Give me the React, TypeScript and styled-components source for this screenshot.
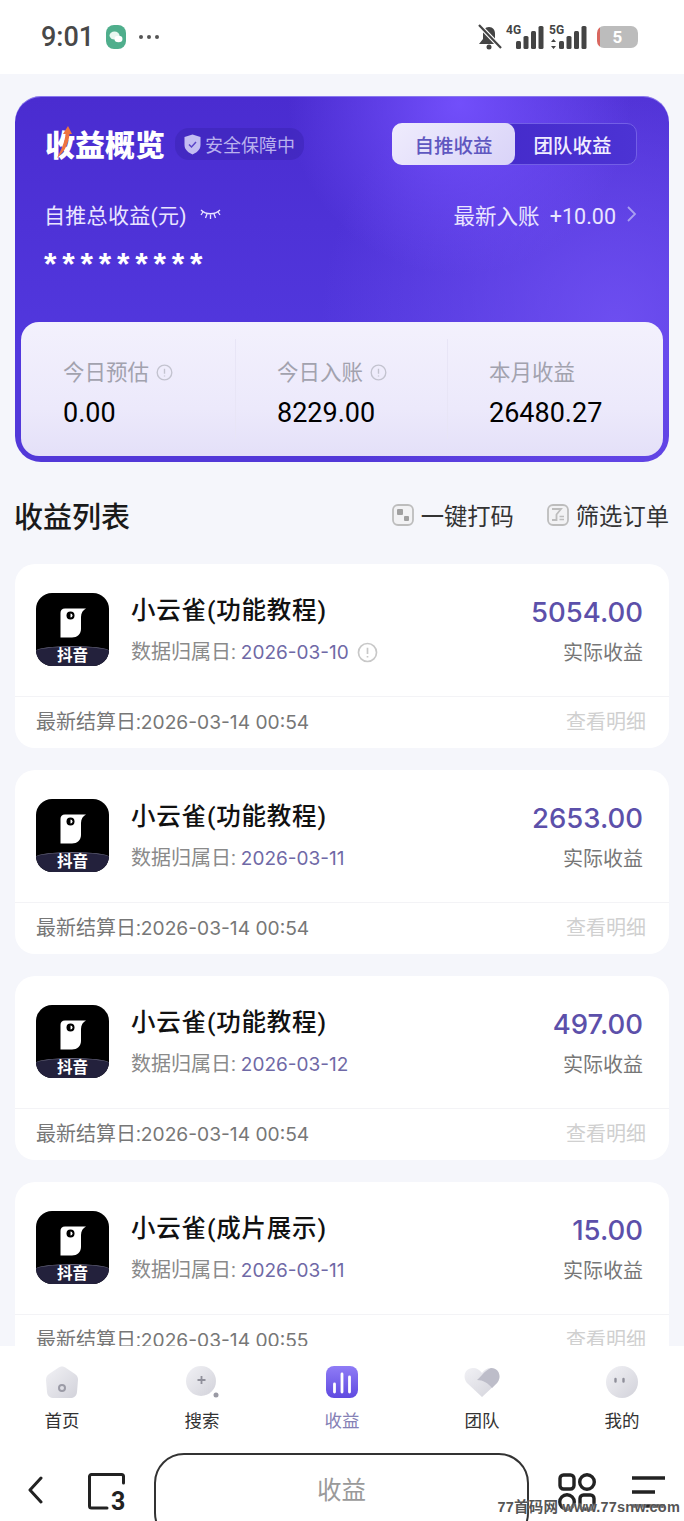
import React from "react";
import styled, { createGlobalStyle } from "styled-components";

const GlobalStyle = createGlobalStyle`
  html, body {
    margin: 0;
    padding: 0;
    background: #f5f6fb;
  }
  * { box-sizing: border-box; }
`;

const Screen = styled.div`
  position: relative;
  width: 684px;
  height: 1521px;
  overflow: hidden;
  display: flex;
  flex-direction: column;
  font-family: Roboto, "Noto Sans CJK SC", sans-serif;
  color: #111;
`;

const StatusBar = styled.div`
  height: 74px;
  flex: none;
  background: #fff;
  display: flex;
  align-items: center;
  justify-content: space-between;
  padding: 0 46px 0 41px;
`;

const StatusLeft = styled.div`
  display: flex;
  align-items: center;
  gap: 12px;
`;

const Clock = styled.span`
  font-size: 27px;
  line-height: 30px;
  font-weight: 500;
  color: #484848;
`;

const StatusRight = styled.div`
  display: flex;
  align-items: center;
  gap: 4px;
`;

const Signal = styled.div`
  position: relative;
  width: 39px;
  height: 26px;
`;

const SignalLabel = styled.span`
  position: absolute;
  left: 0;
  top: 0;
  font-size: 12px;
  line-height: 12px;
  font-weight: 700;
  color: #444;
`;

const Battery = styled.div`
  width: 41px;
  height: 22px;
  margin-left: 5px;
  border-radius: 7px;
  background: linear-gradient(90deg, #d9675f 0 3px, #bcbcbc 3px);
  color: #fff;
  font-size: 17px;
  font-weight: 700;
  line-height: 22px;
  text-align: center;
`;

const Main = styled.main`
  flex: 1;
  min-height: 0;
  overflow: hidden;
  padding: 22px 15px 0;
  display: flex;
  flex-direction: column;
`;

const Hero = styled.section`
  flex: none;
  height: 366px;
  padding: 27px 6px 6px;
  border-radius: 26px;
  box-shadow: inset 0 1px 0 #8a78ee;
  background:
    radial-gradient(circle at 68% 2%, rgba(118, 82, 255, 0.9), rgba(118, 82, 255, 0) 30%),
    radial-gradient(circle at 92% 62%, rgba(116, 84, 245, 0.8), rgba(116, 84, 245, 0) 46%),
    linear-gradient(180deg, #4a2cd0 0%, #5238de 70%, #5238d8 100%);
`;

const HeroHead = styled.div`
  height: 42px;
  padding: 0 26px 0 24px;
  display: flex;
  align-items: center;
  justify-content: space-between;
`;

const TitleGroup = styled.div`
  display: flex;
  align-items: center;
  gap: 10px;
`;

const HeroTitle = styled.h1`
  position: relative;
  margin: 0;
  padding-top: 4px;
  font-size: 30px;
  line-height: 36px;
  font-weight: 900;
  color: #fff;
`;

const TitleArrow = styled.svg`
  position: absolute;
  left: 11px;
  top: 2px;
`;

const SafeBadge = styled.div`
  height: 32px;
  padding: 0 9px;
  border-radius: 14px;
  background: rgba(60, 36, 180, 0.55);
  display: flex;
  align-items: center;
  gap: 4px;
  font-size: 18px;
  color: #b9b1ee;
`;

const Tabs = styled.div`
  width: 245px;
  height: 42px;
  display: flex;
  border: 1px solid #735fe6;
  border-radius: 10px;
  background: linear-gradient(90deg, #3f25c4, #4c33d4);
`;

const Tab = styled.div<{ $active?: boolean }>`
  flex: ${(p) => (p.$active ? "0 0 123px" : "1")};
  margin: ${(p) => (p.$active ? "-1px 0 -1px -1px" : "0")};
  padding-right: ${(p) => (p.$active ? "0" : "6px")};
  display: flex;
  align-items: center;
  justify-content: center;
  border-radius: 10px;
  font-size: 19.5px;
  font-weight: 500;
  color: ${(p) => (p.$active ? "#5f57c0" : "#f0edff")};
  background: ${(p) => (p.$active ? "linear-gradient(135deg, #efecfd, #d9d3f8)" : "transparent")};
`;

const TotalRow = styled.div`
  height: 28px;
  margin-top: 35px;
  padding: 0 26px 0 23px;
  display: flex;
  align-items: center;
  justify-content: space-between;
  font-size: 21px;
  color: #e9e5ff;
`;

const TotalLabel = styled.div`
  display: flex;
  align-items: center;
  gap: 13px;
  letter-spacing: 0.3px;
`;

const LatestLink = styled.div`
  display: flex;
  align-items: center;
  gap: 10px;
  font-size: 21.5px;
  word-spacing: 5px;
`;

const Stars = styled.div`
  height: 30px;
  margin-top: 16px;
  padding-left: 23px;
  font-family: "Liberation Sans", sans-serif;
  font-size: 32px;
  line-height: 40px;
  font-weight: 700;
  letter-spacing: 5.8px;
  color: #fff;
`;

const SummaryPanel = styled.div`
  height: 134px;
  margin-top: 48px;
  border-radius: 18px;
  background: linear-gradient(180deg, #f3f1fd 0%, #ece9fb 65%, #e4e0f8 100%);
  display: grid;
  grid-template-columns: 214px 212px 1fr;
  align-items: center;
`;

const SummaryCell = styled.div<{ $divided?: boolean }>`
  height: 100px;
  padding: 8px 0 0 ${(p) => (p.$divided ? "41px" : "42px")};
  border-left: ${(p) => (p.$divided ? "1px solid #e8e5f6" : "none")};
  display: flex;
  flex-direction: column;
  gap: 9px;
  justify-content: center;
`;

const SummaryLabel = styled.div`
  display: flex;
  align-items: center;
  gap: 7px;
  font-size: 21.5px;
  line-height: 30px;
  color: #a2a2ae;
`;

const SummaryValue = styled.div`
  font-size: 27px;
  line-height: 32px;
  color: #000;
`;

const ListHead = styled.div`
  flex: none;
  height: 102px;
  padding-top: 4px;
  display: flex;
  align-items: center;
  justify-content: space-between;
`;

const ListTitle = styled.h2`
  margin: 0 0 0 -1px;
  font-size: 29px;
  font-weight: 500;
  color: #1a1a1a;
`;

const ListActions = styled.div`
  display: flex;
  gap: 33px;
`;

const ListAction = styled.div`
  display: flex;
  align-items: center;
  gap: 7px;
  font-size: 23.3px;
  color: #333;
`;

const Cards = styled.div`
  display: flex;
  flex-direction: column;
  gap: 22px;
`;

const Card = styled.article`
  flex: none;
  height: 184px;
  border-radius: 20px;
  background: #fff;
  display: flex;
  flex-direction: column;
`;

const CardBody = styled.div`
  height: 133px;
  padding: 3px 26px 0 21px;
  border-bottom: 1px solid #f3f3f6;
  display: flex;
  align-items: center;
  gap: 22px;
`;

const AppIcon = styled.div`
  width: 73px;
  height: 73px;
  margin-top: -5px;
  flex: none;
  overflow: hidden;
  border-radius: 16px;
  background: #000;
  display: flex;
  flex-direction: column;
  align-items: center;
  justify-content: flex-end;
`;

const AppBird = styled.svg`
  flex: none;
  margin: 0 0 8px 1px;
`;

const AppBadge = styled.div`
  width: 100%;
  height: 20px;
  border-top: 1px solid #6b6a80;
  border-radius: 50% 50% 0 0 / 5px 5px 0 0;
  background: #23213c;
  color: #fff;
  font-size: 15.5px;
  line-height: 19px;
  font-weight: 700;
  text-align: center;
`;

const CardInfo = styled.div`
  flex: 1;
  display: flex;
  flex-direction: column;
  gap: 10px;
`;

const CardTitle = styled.div`
  font-size: 24.5px;
  line-height: 32px;
  font-weight: 500;
  letter-spacing: 0.8px;
  color: #111;
`;

const CardSub = styled.div`
  display: flex;
  align-items: center;
  gap: 8px;
  font-size: 20px;
  line-height: 30px;
  color: #8a8a8a;
`;

const DateValue = styled.span`
  font-family: Inter, sans-serif;
  font-size: 19px;
  color: #6f69a6;
`;

const CardRight = styled.div`
  display: flex;
  flex-direction: column;
  align-items: flex-end;
  gap: 10px;
`;

const Amount = styled.div`
  font-family: Inter, sans-serif;
  font-size: 27.5px;
  line-height: 32px;
  font-weight: 500;
  color: #5c50aa;
`;

const AmountLabel = styled.div`
  font-size: 20px;
  line-height: 30px;
  color: #777;
`;

const CardFoot = styled.div`
  flex: 1;
  padding: 0 23px 4px 21px;
  display: flex;
  align-items: center;
  justify-content: space-between;
  font-size: 20px;
  color: #777;
`;

const SettledValue = styled.span`
  font-family: Inter, sans-serif;
  font-size: 19.2px;
`;

const DetailLink = styled.span`
  color: #d0d0d0;
`;

const Bottom = styled.div`
  flex: none;
  height: 175px;
  overflow: hidden;
  background: #fff;
  display: flex;
  flex-direction: column;
`;

const TabBar = styled.nav`
  flex: none;
  height: 107px;
  padding: 20px 22px 0;
  display: flex;
  justify-content: space-between;
`;

const NavItem = styled.div<{ $active?: boolean }>`
  width: 80px;
  display: flex;
  flex-direction: column;
  align-items: center;
  font-size: 17.5px;
  line-height: 26px;
  color: ${(p) => (p.$active ? "#8580b5" : "#333")};
`;

const NavGlyph = styled.div`
  height: 34px;
  margin-bottom: 8px;
  display: flex;
  align-items: flex-start;
  justify-content: center;
`;

const BrowserBar = styled.div`
  flex: none;
  height: 68px;
  padding: 0 19px 0 28px;
  display: flex;
  align-items: flex-start;
`;

const BrowserIcon = styled.svg<{ $left: number; $top: number }>`
  flex: none;
  margin-left: ${(p) => p.$left}px;
  margin-top: ${(p) => p.$top}px;
`;

const AddressPill = styled.div`
  flex: none;
  width: 375px;
  height: 90px;
  margin-left: 29px;
  border: 2px solid #333;
  border-radius: 30px;
  padding-top: 19px;
  text-align: center;
  font-size: 24.5px;
  line-height: 34px;
  color: #9a9a9a;
`;

const Watermark = styled.div`
  position: absolute;
  right: 4px;
  bottom: 6px;
  font-family: "Liberation Sans", "Noto Sans CJK SC", sans-serif;
  font-size: 14.5px;
  line-height: 16px;
  font-weight: 700;
  letter-spacing: 0.2px;
  color: #555;
  text-shadow: 0 0 2px #fff;
`;

const InfoIcon = ({ size, color }: { size: number; color: string }) => (
  <svg width={size} height={size} viewBox="0 0 20 20" fill="none" stroke={color} strokeWidth="1.6">
    <circle cx="10" cy="10" r="8.6" />
    <path d="M10 5.5v6M10 13.4v1.4" />
  </svg>
);

const Bird = () => (
  <AppBird width="26" height="30" viewBox="0 0 26 30">
    <path d="M5 0.500H26C23 2 21 5 21 9V21C21 26 17 29.500 12 29.500H0.500V5C0.500 2 2 0.500 5 0.500Z" fill="#fff" />
    <circle cx="10.500" cy="7.500" r="4" fill="#000" />
    <path d="M10.500 5.500a2 2 0 0 1 0 4Z" fill="#fff" />
  </AppBird>
);

const IncomeCard = ({
  name,
  date,
  amount,
  settled,
  hasInfo,
}: {
  name: string;
  date: string;
  amount: string;
  settled: string;
  hasInfo?: boolean;
}) => (
  <Card>
    <CardBody>
      <AppIcon>
        <Bird />
        <AppBadge>抖音</AppBadge>
      </AppIcon>
      <CardInfo>
        <CardTitle>{name}</CardTitle>
        <CardSub>
          <span>
            数据归属日: <DateValue>{date}</DateValue>
          </span>
          {hasInfo && <InfoIcon size={21} color="#c8c8c8" />}
        </CardSub>
      </CardInfo>
      <CardRight>
        <Amount>{amount}</Amount>
        <AmountLabel>实际收益</AmountLabel>
      </CardRight>
    </CardBody>
    <CardFoot>
      <span>
        最新结算日:<SettledValue>{settled}</SettledValue>
      </span>
      <DetailLink>查看明细</DetailLink>
    </CardFoot>
  </Card>
);

const navIcons: Record<string, React.ReactNode> = {
  home: (
    <svg width="32" height="32" viewBox="0 0 32 32">
      <path d="M16 0.500C17.500 0.500 18.500 1 20 2L29 8C31 9.500 32 11 32 14L31 26C30.500 30 28 32 24 32H8C4 32 1.500 30 1 26L0 14C0 11 1 9.500 3 8L12 2C13.500 1 14.500 0.500 16 0.500Z" fill="url(#navGrey)" />
      <circle cx="16" cy="22" r="3" fill="none" stroke="#9b9ba6" strokeWidth="2" />
    </svg>
  ),
  search: (
    <svg width="33" height="32" viewBox="0 0 33 32">
      <circle cx="15" cy="15" r="15" fill="url(#navGrey)" />
      <path d="M15.500 10v8M11.500 14h8" stroke="#8f8f9a" strokeWidth="1.800" />
      <circle cx="30" cy="29" r="2.500" fill="#9a9aa4" />
    </svg>
  ),
  income: (
    <svg width="32" height="32" viewBox="0 0 32 32">
      <rect width="32" height="32" rx="8" fill="url(#navPurple)" />
      <path d="M8.500 18v8M16 8v18M23.500 11v15" stroke="#fff" strokeWidth="2.800" strokeLinecap="round" />
    </svg>
  ),
  team: (
    <svg width="36" height="32" viewBox="0 0 36 32">
      <path d="M18 31L3 17C-2 11 1 2 9 2C13 2 16 4 18 7C20 4 23 2 27 2C35 2 38 11 33 17Z" fill="url(#navGrey)" />
      <path d="M13 14C17 11 20 5 27 2C35 2 38 11 33 17L28 22C24 17 19 14 13 14Z" fill="#bdbdc9" />
    </svg>
  ),
  mine: (
    <svg width="32" height="32" viewBox="0 0 32 32">
      <circle cx="16" cy="16" r="16" fill="url(#navGrey)" />
      <path d="M9.500 13v2.500M17.500 13v2.500" stroke="#8f8f9a" strokeWidth="2.400" strokeLinecap="round" />
    </svg>
  ),
};

const navItems = [
  { key: "home", label: "首页" },
  { key: "search", label: "搜索" },
  { key: "income", label: "收益", active: true },
  { key: "team", label: "团队" },
  { key: "mine", label: "我的" },
];

const cards = [
  { name: "小云雀(功能教程)", date: "2026-03-10", amount: "5054.00", settled: "2026-03-14 00:54", hasInfo: true },
  { name: "小云雀(功能教程)", date: "2026-03-11", amount: "2653.00", settled: "2026-03-14 00:54" },
  { name: "小云雀(功能教程)", date: "2026-03-12", amount: "497.00", settled: "2026-03-14 00:54" },
  { name: "小云雀(成片展示)", date: "2026-03-11", amount: "15.00", settled: "2026-03-14 00:55" },
];

const SignalBars = ({ fiveG }: { fiveG?: boolean }) => (
  <svg width="39" height="26" viewBox="0 0 39 26" style={{ position: "absolute", left: 0, top: 0 }}>
    <g fill="#444">
      {fiveG && <path d="M4.500 15l2.500 3H2ZM4.500 25l2.500-3H2Z" />}
      <rect x="10" y="17" width="5" height="8" rx="1.500" />
      <rect x="17.500" y="12" width="5" height="13" rx="1.500" />
      <rect x="25" y="7" width="5" height="18" rx="1.500" />
      <rect x="32.500" y="2" width="5" height="23" rx="1.500" />
    </g>
  </svg>
);

export default function App() {
  return (
    <Screen>
      <GlobalStyle />
      <svg width="0" height="0" style={{ position: "absolute" }}>
        <defs>
          <linearGradient id="navGrey" x1="0" y1="0" x2="1" y2="1">
            <stop offset="0" stopColor="#f1f1f5" />
            <stop offset="1" stopColor="#d2d2da" />
          </linearGradient>
          <linearGradient id="navPurple" x1="0" y1="0" x2="0" y2="1">
            <stop offset="0" stopColor="#8f7cf6" />
            <stop offset="1" stopColor="#5f4ae0" />
          </linearGradient>
        </defs>
      </svg>

      <StatusBar>
        <StatusLeft>
          <Clock>9:01</Clock>
          <svg width="20" height="24" viewBox="0 0 20 24">
            <rect width="20" height="24" rx="8" fill="#4fae8c" />
            <ellipse cx="8.500" cy="10.500" rx="5" ry="4" fill="#e8f7f0" />
            <ellipse cx="12.500" cy="14" rx="4" ry="3.200" fill="#fff" />
          </svg>
          <svg width="22" height="6" viewBox="0 0 22 6" fill="#555">
            <circle cx="3" cy="3" r="2" />
            <circle cx="11" cy="3" r="2" />
            <circle cx="19" cy="3" r="2" />
          </svg>
        </StatusLeft>
        <StatusRight>
          <svg width="25" height="26" viewBox="0 0 25 26">
            <path d="M12 3C8 3 6 6 6 10V15L2 20H22L18 15V10C18 6 16 3 12 3Z" fill="#444" />
            <circle cx="12" cy="23" r="2.500" fill="#444" />
            <path d="M2 1L24 24" stroke="#fff" strokeWidth="4.500" />
            <path d="M2 1L24 24" stroke="#444" strokeWidth="2.200" />
          </svg>
          <Signal>
            <SignalLabel>4G</SignalLabel>
            <SignalBars />
          </Signal>
          <Signal>
            <SignalLabel>5G</SignalLabel>
            <SignalBars fiveG />
          </Signal>
          <Battery>5</Battery>
        </StatusRight>
      </StatusBar>

      <Main>
        <Hero>
          <HeroHead>
            <TitleGroup>
              <HeroTitle>
                收益概览
                <TitleArrow width="16" height="32" viewBox="0 0 16 32">
                  <path d="M12 0L16 8H13.500C13 16 9 26 1 32C5 24 9 16 9.500 8H7Z" fill="#ee7440" />
                </TitleArrow>
              </HeroTitle>
              <SafeBadge>
                <svg width="17" height="21" viewBox="0 0 17 21">
                  <path d="M8.500 0.500L16.500 3V11C16.500 16 12 19 8.500 20.500C5 19 0.500 16 0.500 11V3Z" fill="#c3bdf2" />
                  <path d="M5 10.500l2.500 2.500 4.500-5" fill="none" stroke="#5a44c8" strokeWidth="1.500" />
                </svg>
                安全保障中
              </SafeBadge>
            </TitleGroup>
            <Tabs>
              <Tab $active>自推收益</Tab>
              <Tab>团队收益</Tab>
            </Tabs>
          </HeroHead>

          <TotalRow>
            <TotalLabel>
              自推总收益(元)
              <svg width="21" height="12" viewBox="0 0 21 12" fill="none" stroke="#e9e5ff" strokeWidth="1.300">
                <path d="M1 2C6 7 15 7 20 2" />
                <path d="M3 4L1 7M7 6L5.500 10M10.500 6.500V11M14 6L15.500 10M18 4L20 7" />
              </svg>
            </TotalLabel>
            <LatestLink>
              最新入账 +10.00
              <svg width="11" height="18" viewBox="0 0 11 18" fill="none" stroke="#a99ff0" strokeWidth="1.800">
                <path d="M2 2L9 9L2 16" />
              </svg>
            </LatestLink>
          </TotalRow>

          <Stars>*********</Stars>

          <SummaryPanel>
            <SummaryCell>
              <SummaryLabel>
                今日预估
                <InfoIcon size={17} color="#c3c3cf" />
              </SummaryLabel>
              <SummaryValue>0.00</SummaryValue>
            </SummaryCell>
            <SummaryCell $divided>
              <SummaryLabel>
                今日入账
                <InfoIcon size={17} color="#c3c3cf" />
              </SummaryLabel>
              <SummaryValue>8229.00</SummaryValue>
            </SummaryCell>
            <SummaryCell $divided>
              <SummaryLabel>本月收益</SummaryLabel>
              <SummaryValue>26480.27</SummaryValue>
            </SummaryCell>
          </SummaryPanel>
        </Hero>

        <ListHead>
          <ListTitle>收益列表</ListTitle>
          <ListActions>
            <ListAction>
              <svg width="22" height="22" viewBox="0 0 22 22">
                <rect x="1" y="1" width="20" height="20" rx="5" fill="#f2f2f4" stroke="#bdbdbd" strokeWidth="1.800" />
                <rect x="5" y="5" width="6" height="6" rx="1" fill="#a0a0a0" />
                <rect x="12" y="12" width="5" height="5" rx="1" fill="#a0a0a0" />
              </svg>
              一键打码
            </ListAction>
            <ListAction>
              <svg width="22" height="22" viewBox="0 0 22 22" fill="none" stroke="#bdbdbd" strokeWidth="1.800">
                <rect x="1" y="1" width="20" height="20" rx="5" fill="#f2f2f4" />
                <path d="M5 5H14L9.500 10.500V16H5" />
                <path d="M12.500 12.500H17M12.500 15.500H17" strokeWidth="1.400" />
              </svg>
              筛选订单
            </ListAction>
          </ListActions>
        </ListHead>

        <Cards>
          {cards.map((c) => (
            <IncomeCard key={c.date + c.amount} {...c} />
          ))}
        </Cards>
      </Main>

      <Bottom>
        <TabBar>
          {navItems.map((n) => (
            <NavItem key={n.key} $active={n.active}>
              <NavGlyph>{navIcons[n.key]}</NavGlyph>
              {n.label}
            </NavItem>
          ))}
        </TabBar>
        <BrowserBar>
          <BrowserIcon $left={0} $top={23} width="15" height="28" viewBox="0 0 15 28" fill="none" stroke="#222" strokeWidth="3" strokeLinecap="round" strokeLinejoin="round">
            <path d="M13 2L2 14L13 26" />
          </BrowserIcon>
          <BrowserIcon $left={45} $top={20} width="37" height="38" viewBox="0 0 37 38" fill="none" stroke="#222" strokeWidth="3" strokeLinecap="round">
            <path d="M35.500 10V3.500a2 2 0 0 0-2-2H3.500a2 2 0 0 0-2 2V33a2 2 0 0 0 2 2H19" />
            <text x="23" y="37" fontFamily="Roboto, sans-serif" fontSize="25" fontWeight="700" fill="#222" stroke="none">
              3
            </text>
          </BrowserIcon>
          <AddressPill>收益</AddressPill>
          <BrowserIcon $left={29} $top={20} width="38" height="38" viewBox="0 0 38 38" fill="none" stroke="#222" strokeWidth="3.400">
            <rect x="2" y="2" width="14" height="14" rx="3.500" />
            <circle cx="29" cy="9" r="7.300" />
            <circle cx="9" cy="29" r="7.300" />
            <rect x="22" y="22" width="14" height="14" rx="3.500" />
          </BrowserIcon>
          <BrowserIcon $left={36} $top={23} width="34" height="32" viewBox="0 0 34 32" stroke="#222" strokeWidth="3.400">
            <path d="M0 2H33M0 16H23M0 30H33" />
          </BrowserIcon>
        </BrowserBar>
      </Bottom>

      <Watermark>77首码网 www.77snw.com</Watermark>
    </Screen>
  );
}
